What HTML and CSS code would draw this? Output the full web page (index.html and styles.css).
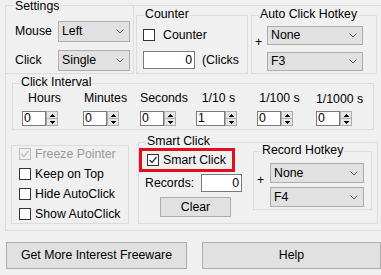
FILE: index.html
```html
<!DOCTYPE html>
<html lang="en">
  <head>
    <meta charset="UTF-8" />
    <title>Auto Click</title>
    <link rel="stylesheet" href="styles.css">
  </head>
  <body>
    <div class="frame">
      <span class="caption caption-top">Settings</span>

      <div class="top-row">
        <div class="mouse-box">
          <div class="pick-row">
            <span class="pick-label">Mouse</span>
            <div class="combo combo-mouse">
              <span>Left</span>
              <svg class="chev" width="8" height="5" viewBox="0 0 8 5"><polyline points="0.5,0.5 4,4 7.5,0.5" /></svg>
            </div>
          </div>
          <div class="pick-row">
            <span class="pick-label">Click</span>
            <div class="combo combo-mouse">
              <span>Single</span>
              <svg class="chev" width="8" height="5" viewBox="0 0 8 5"><polyline points="0.5,0.5 4,4 7.5,0.5" /></svg>
            </div>
          </div>
        </div>

        <div class="group counter-box">
          <span class="caption">Counter</span>
          <div class="check-row counter-check">
            <span class="box"></span>
            <span>Counter</span>
          </div>
          <div class="counter-count">
            <div class="field counter-field">0</div>
            <span class="clicks">(Clicks</span>
          </div>
        </div>

        <div class="group hotkey-box">
          <span class="caption">Auto Click Hotkey</span>
          <span class="plus">+</span>
          <div class="combo-stack">
            <div class="combo combo-key">
              <span>None</span>
              <svg class="chev" width="8" height="5" viewBox="0 0 8 5"><polyline points="0.5,0.5 4,4 7.5,0.5" /></svg>
            </div>
            <div class="combo combo-key">
              <span>F3</span>
              <svg class="chev" width="8" height="5" viewBox="0 0 8 5"><polyline points="0.5,0.5 4,4 7.5,0.5" /></svg>
            </div>
          </div>
        </div>
      </div>

      <div class="group interval-box">
        <span class="caption">Click Interval</span>
        <div class="interval-grid">
          <div class="col">
            <span class="col-label">Hours</span>
            <div class="spin">
              <span class="spin-field">0</span>
              <span class="spin-btn">
                <span class="spin-half"><svg width="5" height="3" viewBox="0 0 5 3"><path d="M2 0h1v1h1v1h1v1H0V2h1V1h1z" /></svg></span>
                <span class="spin-half"><svg width="5" height="3" viewBox="0 0 5 3"><path d="M0 0h5v1H4v1H3v1H2V2H1V1H0z" /></svg></span>
              </span>
            </div>
          </div>
          <div class="col">
            <span class="col-label">Minutes</span>
            <div class="spin">
              <span class="spin-field">0</span>
              <span class="spin-btn">
                <span class="spin-half"><svg width="5" height="3" viewBox="0 0 5 3"><path d="M2 0h1v1h1v1h1v1H0V2h1V1h1z" /></svg></span>
                <span class="spin-half"><svg width="5" height="3" viewBox="0 0 5 3"><path d="M0 0h5v1H4v1H3v1H2V2H1V1H0z" /></svg></span>
              </span>
            </div>
          </div>
          <div class="col">
            <span class="col-label">Seconds</span>
            <div class="spin">
              <span class="spin-field">0</span>
              <span class="spin-btn">
                <span class="spin-half"><svg width="5" height="3" viewBox="0 0 5 3"><path d="M2 0h1v1h1v1h1v1H0V2h1V1h1z" /></svg></span>
                <span class="spin-half"><svg width="5" height="3" viewBox="0 0 5 3"><path d="M0 0h5v1H4v1H3v1H2V2H1V1H0z" /></svg></span>
              </span>
            </div>
          </div>
          <div class="col">
            <span class="col-label">1/10 s</span>
            <div class="spin spin-wide">
              <span class="spin-field">1</span>
              <span class="spin-btn">
                <span class="spin-half"><svg width="5" height="3" viewBox="0 0 5 3"><path d="M2 0h1v1h1v1h1v1H0V2h1V1h1z" /></svg></span>
                <span class="spin-half"><svg width="5" height="3" viewBox="0 0 5 3"><path d="M0 0h5v1H4v1H3v1H2V2H1V1H0z" /></svg></span>
              </span>
            </div>
          </div>
          <div class="col">
            <span class="col-label">1/100 s</span>
            <div class="spin">
              <span class="spin-field">0</span>
              <span class="spin-btn">
                <span class="spin-half"><svg width="5" height="3" viewBox="0 0 5 3"><path d="M2 0h1v1h1v1h1v1H0V2h1V1h1z" /></svg></span>
                <span class="spin-half"><svg width="5" height="3" viewBox="0 0 5 3"><path d="M0 0h5v1H4v1H3v1H2V2H1V1H0z" /></svg></span>
              </span>
            </div>
          </div>
          <div class="col">
            <span class="col-label col-label-low">1/1000 s</span>
            <div class="spin">
              <span class="spin-field">0</span>
              <span class="spin-btn">
                <span class="spin-half"><svg width="5" height="3" viewBox="0 0 5 3"><path d="M2 0h1v1h1v1h1v1H0V2h1V1h1z" /></svg></span>
                <span class="spin-half"><svg width="5" height="3" viewBox="0 0 5 3"><path d="M0 0h5v1H4v1H3v1H2V2H1V1H0z" /></svg></span>
              </span>
            </div>
          </div>
        </div>
      </div>

      <div class="bottom-row">
        <div class="group options-box">
          <div class="check-row disabled">
            <span class="box"><svg width="10" height="10" viewBox="0 0 10 10"><path d="M1.5 5l2.5 2.5L8.5 2" /></svg></span>
            <span>Freeze Pointer</span>
          </div>
          <div class="check-row">
            <span class="box"></span>
            <span>Keep on Top</span>
          </div>
          <div class="check-row">
            <span class="box"></span>
            <span>Hide AutoClick</span>
          </div>
          <div class="check-row">
            <span class="box"></span>
            <span>Show AutoClick</span>
          </div>
        </div>

        <div class="group smart-box">
          <span class="caption">Smart Click</span>
          <div class="smart-col">
            <div class="highlight">
              <span class="box"><svg width="10" height="10" viewBox="0 0 10 10"><path d="M1.5 5l2.5 2.5L8.5 2" /></svg></span>
              <span>Smart Click</span>
            </div>
            <div class="records-row">
              <span class="records-label">Records:</span>
              <div class="field records-field">0</div>
            </div>
            <button class="btn clear-btn">Clear</button>
          </div>

          <div class="group record-box">
            <span class="caption">Record Hotkey</span>
            <span class="plus">+</span>
            <div class="combo-stack record-stack">
              <div class="combo combo-rec">
                <span>None</span>
                <svg class="chev" width="8" height="5" viewBox="0 0 8 5"><polyline points="0.5,0.5 4,4 7.5,0.5" /></svg>
              </div>
              <div class="combo combo-rec">
                <span>F4</span>
                <svg class="chev" width="8" height="5" viewBox="0 0 8 5"><polyline points="0.5,0.5 4,4 7.5,0.5" /></svg>
              </div>
            </div>
          </div>
        </div>
      </div>
    </div>

    <div class="actions">
      <button class="btn more-btn">Get More Interest Freeware</button>
      <button class="btn help-btn">Help</button>
    </div>
  </body>
</html>
```

FILE: styles.css
```css
* {
  box-sizing: border-box;
}

body {
  margin: 0;
  width: 381px;
  height: 275px;
  overflow: hidden;
  background: #f0f0f0;
  color: #000;
  font-family: "Liberation Sans", Arial, sans-serif;
  font-size: 12.3px;
  line-height: 13px;
}

/* group boxes */
.frame {
  position: relative;
  width: 400px;
  height: 226px;
  margin: 5px 0 0 5px;
  border: 1px solid #dcdcdc;
}
.group {
  position: relative;
  border: 1px solid #dcdcdc;
}
.caption {
  position: absolute;
  top: -8px;
  left: 7px;
  padding: 0 1px;
  background: #f0f0f0;
  white-space: nowrap;
}
.caption-top {
  top: -6px;
  left: 8px;
}

/* controls */
.combo {
  display: flex;
  align-items: center;
  justify-content: space-between;
  padding: 0 5px 0 3px;
  background: #e1e1e1;
  border: 1px solid #adadad;
}
.chev polyline {
  fill: none;
  stroke: #5a5a5a;
  stroke-width: 1;
}
.field {
  height: 18px;
  padding-right: 2px;
  border: 1px solid #7a7a7a;
  background: #fff;
  text-align: right;
  line-height: 16px;
}
.check-row {
  display: flex;
  align-items: center;
  gap: 4px;
  height: 12px;
  line-height: 12px;
  white-space: nowrap;
}
.box {
  display: flex;
  align-items: center;
  justify-content: center;
  flex: none;
  width: 12px;
  height: 12px;
  border: 1px solid #333;
  background: #fff;
}
.box path {
  fill: none;
  stroke: #333;
  stroke-width: 1.2;
}
.disabled {
  color: #999;
}
.disabled .box {
  border-color: #bcbcbc;
  background: transparent;
}
.disabled .box path {
  stroke: #bcbcbc;
}
.btn {
  display: block;
  padding: 0;
  font: inherit;
  color: #000;
  background: #e1e1e1;
  border: 1px solid #adadad;
}

/* top row */
.top-row {
  display: flex;
  height: 68px;
}
.mouse-box {
  width: 128px;
  height: 68px;
  padding: 15px 0 0 9px;
  border-right: 1px solid #dcdcdc;
  border-bottom: 1px solid #dcdcdc;
}
.pick-row {
  display: flex;
  align-items: center;
  height: 21px;
}
.pick-row + .pick-row {
  margin-top: 8px;
}
.pick-label {
  width: 43px;
}
.combo-mouse {
  width: 72px;
  height: 21px;
}

.counter-box {
  width: 112px;
  height: 59px;
  margin: 9px 0 0 2px;
  padding: 13px 0 0 6px;
}
.counter-check {
  gap: 8px;
}
.counter-count {
  display: flex;
  align-items: center;
  margin-top: 10px;
}
.counter-field {
  width: 52px;
}
.clicks {
  margin-left: 7px;
  white-space: nowrap;
}

.hotkey-box {
  display: flex;
  width: 126px;
  height: 59px;
  margin: 9px 0 0 3px;
  padding: 10px 0 0 3px;
}
.plus {
  width: 13px;
  margin-top: 11px;
}
.hotkey-box .plus {
  width: 12px;
  margin-top: 10px;
}
.combo-stack {
  display: flex;
  flex-direction: column;
  gap: 7px;
}
.combo-key {
  width: 96px;
  height: 19px;
}

/* click interval */
.interval-box {
  width: 362px;
  height: 47px;
  margin: 9px 0 0 6px;
  padding: 8px 0 0 9px;
}
.interval-grid {
  display: grid;
  grid-template-columns: 61px 57px 56px 61px 59px 45px;
}
.col {
  display: flex;
  flex-direction: column;
  align-items: flex-start;
}
.col-label {
  width: 45px;
  text-align: center;
  white-space: nowrap;
}
.col-label-low {
  margin-top: 1px;
  margin-bottom: -1px;
}
.spin {
  display: flex;
  width: 36px;
  height: 15px;
  margin-top: 6px;
}
.spin-wide {
  width: 41px;
}
.spin-field {
  flex: 1;
  padding-left: 1px;
  border: 1px solid #7a7a7a;
  background: #fff;
  line-height: 13px;
}
.spin-btn {
  display: flex;
  flex-direction: column;
  width: 12px;
}
.spin-half {
  display: flex;
  align-items: center;
  justify-content: center;
  height: 8px;
  background: #e6e6e6;
  border: 1px solid #adadad;
}
.spin-half + .spin-half {
  margin-top: -1px;
}
.spin-half path {
  fill: #000;
}

/* bottom row */
.bottom-row {
  display: flex;
  align-items: flex-end;
  height: 82px;
  margin-top: 12px;
}
.options-box {
  display: flex;
  flex-direction: column;
  gap: 8px;
  width: 118px;
  height: 79px;
  margin-left: 5px;
  padding: 2px 0 0 7px;
}

.smart-box {
  display: flex;
  width: 240px;
  height: 82px;
  margin-left: 9px;
}
.smart-col {
  width: 114px;
  padding-top: 5px;
}
.highlight {
  display: flex;
  align-items: center;
  gap: 4px;
  width: 96px;
  height: 24px;
  padding-left: 5px;
  border: 3px solid #e0101a;
}
.records-row {
  display: flex;
  align-items: center;
  margin-top: 2px;
  padding-left: 6px;
}
.records-label {
  width: 56px;
}
.records-field {
  width: 41px;
}
.clear-btn {
  width: 71px;
  height: 20px;
  margin: 5px 0 0 21px;
}

.record-box {
  display: flex;
  width: 119px;
  height: 59px;
  margin-top: 8px;
  padding: 11px 0 0 3px;
}
.record-stack {
  gap: 4px;
}
.combo-rec {
  width: 94px;
  height: 20px;
}

/* buttons under the frame */
.actions {
  display: flex;
  margin-top: 11px;
  padding-left: 6px;
}
.more-btn {
  width: 181px;
  height: 27px;
}
.help-btn {
  width: 179px;
  height: 27px;
  margin-left: 15px;
}
```
